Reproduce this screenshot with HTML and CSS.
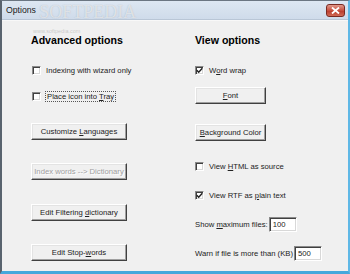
FILE: index.html
```html
<!DOCTYPE html>
<html>
<head>
<meta charset="utf-8">
<link rel="stylesheet" href="styles.css">
</head>
<body>
<div class="window">
  <div class="titlebar">
    <span class="title">Options</span>
    <span class="close"><svg width="9" height="7" viewBox="0 0 9 7"><path d="M1 0.5 L8 6.5 M8 0.5 L1 6.5" stroke="#fff" stroke-width="1.8" fill="none"/></svg></span>
  </div>
  <div class="client">
    <div class="col col-left">
      <div class="heading">Advanced options</div>
      <label class="check gap-18"><span class="box"></span><span>Indexing with wizard only</span></label>
      <label class="check gap-14"><span class="box"></span><span class="focus">Place icon into <u>T</u>ray</span></label>
      <div class="btn gap-21"><span>Customize <u>L</u>anguages</span></div>
      <div class="btn disabled gap-23"><span>Index words --&gt; Dictionary</span></div>
      <div class="btn gap-24"><span>Edit Filtering <u>d</u>ictionary</span></div>
      <div class="btn gap-23"><span>Edit Stop-<u>w</u>ords</span></div>
    </div>
    <div class="col col-right">
      <div class="heading">View options</div>
      <label class="check gap-18"><span class="box checked"><svg width="7" height="7" viewBox="0 0 7 7"><path d="M0.8 3.3 L2.7 5.3 L6.3 1.2" stroke="#222" stroke-width="1.4" fill="none"/></svg></span><span>W<u>o</u>rd wrap</span></label>
      <div class="btn small gap-11"><span><u>F</u>ont</span></div>
      <div class="btn small gap-20"><span><u>B</u>ackground Color</span></div>
      <label class="check gap-19"><span class="box"></span><span>View <u>H</u>TML as source</span></label>
      <label class="check gap-17"><span class="box checked"><svg width="7" height="7" viewBox="0 0 7 7"><path d="M0.8 3.3 L2.7 5.3 L6.3 1.2" stroke="#222" stroke-width="1.4" fill="none"/></svg></span><span>View RTF as <u>p</u>lain text</span></label>
      <div class="field gap-16"><span>Show <u>m</u>aximum files:</span><span class="input">100</span></div>
      <div class="field gap-14"><span>Warn if file is more than (KB)</span><span class="input">500</span></div>
    </div>
  </div>
  <div class="wm-big">SOFTPEDIA</div>
  <div class="wm-small">www.softpedia.com</div>
</div>
</body>
</html>
```

FILE: styles.css
```css
* { box-sizing: border-box; }
html, body { margin: 0; padding: 0; }
body {
  width: 350px;
  height: 274px;
  overflow: hidden;
  background: #f0f0f0;
  font-family: "Liberation Sans", Arial, sans-serif;
}
.window {
  position: relative;
  width: 350px;
  height: 274px;
  background: #f0f0f0;
  border-left: 2px solid #59636e;
  border-right: 2px solid #5fb8e6;
  border-bottom: 3px solid #45a8dc;
  border-top: 1px solid #6b7682;
  display: flex;
  flex-direction: column;
}
.titlebar {
  height: 19px;
  flex: none;
  display: flex;
  align-items: center;
  justify-content: space-between;
  padding: 0 3px 0 3px;
  background: linear-gradient(#dde7f2, #cfdbea);
  border-bottom: 1px solid #b9c6d6;
}
.title {
  font-size: 8.7px;
  color: #1b1b1b;
  padding-left: 1px;
  margin-top: -1px;
}
.close {
  width: 19px;
  height: 13px;
  margin-top: 1px;
  border: 1px solid #7a2a22;
  border-radius: 3px;
  background: linear-gradient(#e09a8c, #c7503f 50%, #b8382a 51%, #d06a55);
  display: flex;
  align-items: center;
  justify-content: center;
}
.client {
  flex: 1;
  display: flex;
  padding-left: 29px;
  border-top: 1px solid #f8f8f8;
}
.col {
  display: flex;
  flex-direction: column;
  align-items: flex-start;
  padding-top: 13px;
}
.col-left { width: 164px; }
.col-right { flex: 1; }
.heading {
  font-weight: bold;
  font-size: 10.6px;
  line-height: 12px;
  color: #000;
  height: 12px;
}
.check {
  display: flex;
  align-items: center;
  height: 12px;
  font-size: 7.7px;
  color: #222;
}
.box {
  width: 9px;
  height: 9px;
  background: #fff;
  border: 1px solid;
  border-color: #8a8a8a #ffffff #ffffff #8a8a8a;
  box-shadow: inset 1px 1px 0 #404040, inset -1px -1px 0 #d8d8d8;
  margin-left: 1px;
  margin-right: 5px;
  display: flex;
  align-items: center;
  justify-content: center;
  flex: none;
}
.col-right .box { margin-left: 0; }
.focus { outline: 1px dotted #555; outline-offset: 0; padding: 0 1px; }
u { text-decoration: underline; text-underline-offset: 1px; }
.btn {
  width: 96px;
  height: 17px;
  display: flex;
  align-items: center;
  justify-content: center;
  font-size: 7.7px;
  color: #222;
  background: #f0f0f0;
  border: 1px solid;
  border-color: #ffffff #404040 #404040 #ffffff;
  box-shadow: inset -1px -1px 0 #a0a0a0, inset 1px 1px 0 #e3e3e3;
  white-space: nowrap;
}
.btn.small { width: 71px; }
.btn.disabled { color: #a0a0a0; text-shadow: 1px 1px 0 #ffffff; }
.field {
  display: flex;
  align-items: center;
  font-size: 7.7px;
  color: #222;
  height: 15px;
}
.input {
  margin-left: 1px;
  width: 28px;
  height: 15px;
  background: #fff;
  border: 1px solid;
  border-color: #8a8a8a #ffffff #ffffff #8a8a8a;
  box-shadow: inset 1px 1px 0 #404040, inset -1px -1px 0 #d8d8d8;
  font-size: 7.7px;
  padding: 1px 3px;
  line-height: 11px;
}
.gap-11 { margin-top: 11px; }
.gap-14 { margin-top: 14px; }
.gap-16 { margin-top: 16px; }
.gap-17 { margin-top: 17px; }
.gap-18 { margin-top: 18px; }
.gap-19 { margin-top: 19px; }
.gap-20 { margin-top: 20px; }
.gap-21 { margin-top: 21px; }
.gap-23 { margin-top: 23px; }
.gap-24 { margin-top: 24px; }
.wm-big {
  position: absolute;
  left: 37px;
  top: 1px;
  font-family: "Liberation Serif", serif;
  font-size: 18px;
  line-height: 20px;
  color: rgba(255,255,255,0.6);
  text-shadow: 0 0 1px rgba(110,120,130,0.45);
  pointer-events: none;
}
.wm-small {
  position: absolute;
  left: 31px;
  top: 27px;
  font-size: 5.5px;
  line-height: 6px;
  color: rgba(120,120,120,0.35);
}
```
